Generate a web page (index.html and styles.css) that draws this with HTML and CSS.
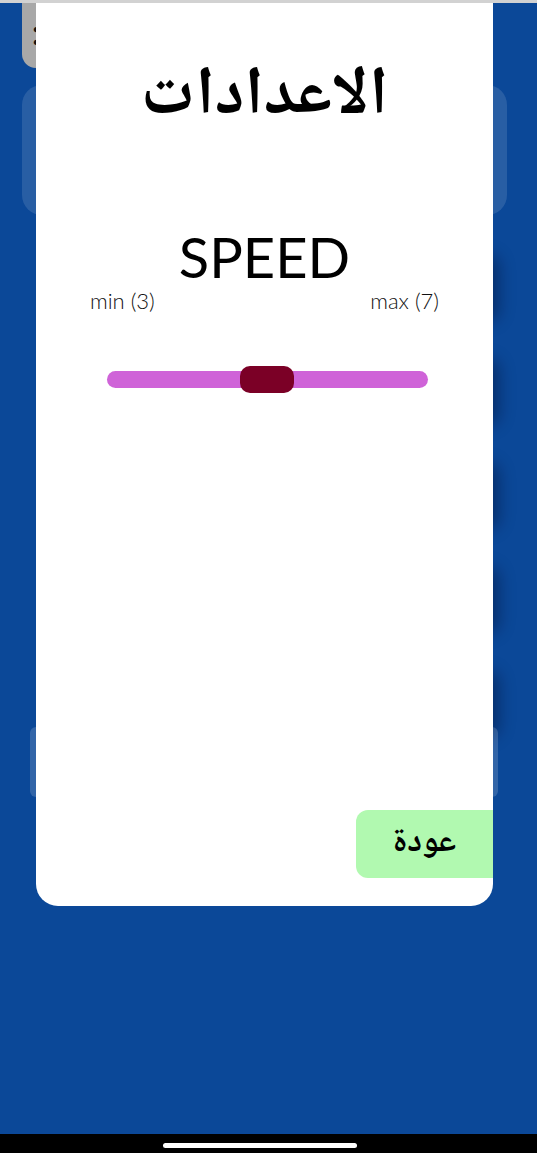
FILE: index.html
```html
<!DOCTYPE html>
<html lang="ar">
<head>
  <meta charset="UTF-8" />
  <title>الاعدادات</title>
  <link rel="stylesheet" href="styles.css">
</head>
<body>
  <div id="statusLine"></div>

  <!-- App screen behind the dialog -->
  <div id="screen">
    <div id="topRow">
      <div class="menu-btn">:</div>
    </div>
    <div class="hero-card"></div>
    <div id="levelList">
      <div class="level-row"></div>
      <div class="level-row"></div>
      <div class="level-row"></div>
      <div class="level-row"></div>
      <div class="level-row"></div>
    </div>
    <div class="bottom-card"></div>
  </div>

  <!-- Settings dialog -->
  <div id="settingsDialog">
    <h1 class="dialog-title">الاعدادات</h1>
    <div class="setting">
      <div class="setting-name">SPEED</div>
      <div class="setting-range">
        <span>min (3)</span>
        <span>max (7)</span>
      </div>
      <div class="slider">
        <div class="slider-thumb"></div>
      </div>
    </div>
    <div class="dialog-footer">
      <button class="back-btn">عودة</button>
    </div>
  </div>

  <div id="navBar"><div class="nav-pill"></div></div>
</body>
</html>
```

FILE: styles.css
```css
/* Global reset */
* {
  margin: 0;
  padding: 0;
  box-sizing: border-box;
}
body {
  width: 537px;
  height: 1153px;
  overflow: hidden;
  background-color: #0b4898;
  font-family: 'Lato', sans-serif;
  display: flex;
  flex-direction: column;
  position: relative;
}

#statusLine {
  height: 3px;
  background-color: #d2d2d2;
}

/* Screen behind dialog */
#screen {
  flex: 1;
  display: flex;
  flex-direction: column;
  padding: 0 30px 0 22px;
}
#topRow {
  display: flex;
}
.menu-btn {
  width: 80px;
  height: 65px;
  background-color: #a8a8a8;
  border-radius: 0 0 14px 14px;
  padding-left: 10px;
  font-size: 34px;
  font-weight: bold;
  color: #111;
  line-height: 58px;
}
.hero-card {
  margin-top: 17px;
  height: 130px;
  background-color: rgba(255, 255, 255, 0.12);
  border-radius: 20px;
}
#levelList {
  display: flex;
  flex-direction: column;
  gap: 38px;
  margin-top: 40px;
}
.level-row {
  height: 66px;
  margin-left: 20px;
  margin-right: 20px;
  border-radius: 12px;
  background-color: #0b4898;
  box-shadow: 12px 0 16px rgba(0, 10, 40, 0.4);
}
.bottom-card {
  margin-top: -10px;
  margin-left: 8px;
  margin-right: 9px;
  height: 70px;
  background-color: rgba(255, 255, 255, 0.16);
  border-radius: 6px;
}

/* Settings dialog (overlays the screen) */
#settingsDialog {
  position: absolute;
  left: 36px;
  top: 3px;
  width: 457px;
  height: 903px;
  background-color: #ffffff;
  border-radius: 0 0 22px 22px;
  display: flex;
  flex-direction: column;
  align-items: center;
}
.dialog-title {
  margin-top: 47px;
  font-family: 'Noto Naskh Arabic', 'Noto Sans Arabic', 'DejaVu Sans', sans-serif;
  font-size: 68px;
  font-weight: bold;
  line-height: 96px;
  color: #000;
}
.setting {
  margin-top: 81px;
  width: 100%;
  display: flex;
  flex-direction: column;
  align-items: center;
}
.setting-name {
  font-size: 56px;
  line-height: 60px;
  color: #000;
}
.setting-range {
  width: 100%;
  display: flex;
  justify-content: space-between;
  padding: 0 54px;
  font-size: 22px;
  font-weight: 300;
  color: #111;
}
.slider {
  margin-top: 57px;
  margin-left: 6px;
  width: 321px;
  height: 17px;
  border-radius: 9px;
  background-color: #cf63d8;
  display: flex;
  align-items: center;
  padding-left: 133px;
}
.slider-thumb {
  width: 54px;
  height: 27px;
  border-radius: 10px;
  background-color: #7b0026;
}

.dialog-footer {
  margin-top: auto;
  margin-bottom: 28px;
  width: 100%;
  display: flex;
  justify-content: flex-end;
}
.back-btn {
  width: 137px;
  height: 68px;
  border: none;
  border-radius: 12px 0 0 12px;
  background-color: #b1f9b0;
  font-family: 'Noto Naskh Arabic', 'Noto Sans Arabic', 'DejaVu Sans', sans-serif;
  font-size: 34px;
  font-weight: bold;
  color: #000;
}

/* System nav bar */
#navBar {
  height: 19px;
  background-color: #000;
  display: flex;
  justify-content: center;
  padding-top: 9px;
}
.nav-pill {
  width: 194px;
  height: 5px;
  margin-right: 17px;
  border-radius: 3px;
  background-color: #fff;
}
```
